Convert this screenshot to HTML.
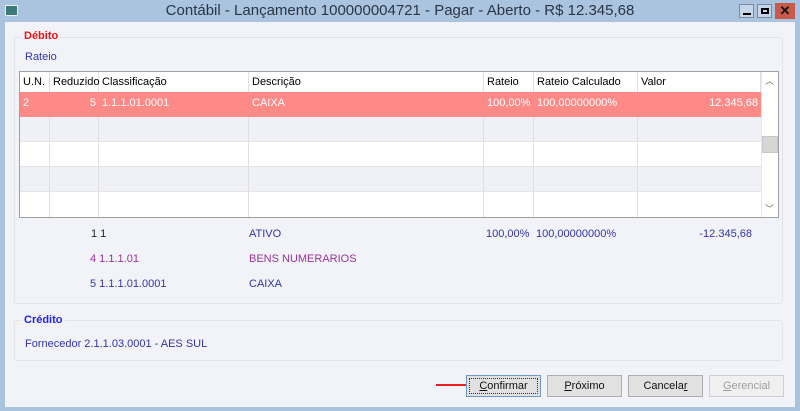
<!DOCTYPE html>
<html><head><style>
*{margin:0;padding:0;box-sizing:border-box}
body{width:800px;height:411px;overflow:hidden;background:#a9c2dd;font-family:"Liberation Sans",sans-serif;font-size:11px;position:relative}
.a{position:absolute}
.title{left:0;top:0;width:800px;height:22px;background:#aac3df;text-align:center;font-size:15px;color:#2b3645;line-height:22px}
.body{left:5px;top:22px;width:790px;height:385px;background:#f2f3f8}
.grp{border:1px solid #e2e4ea;border-radius:3px;background:#f2f3f8}
.lbl{font-weight:bold;font-size:11px}
.grid{left:19px;top:71px;width:760px;height:147px;border:1px solid #a0a0a0;background:#fff;overflow:hidden}
.row{position:absolute;left:0;width:741px;height:25px}
.c{position:absolute;top:0;height:100%;border-right:1px solid #e0e0e0;padding:0 3px;white-space:nowrap;line-height:20px}
.btn{position:absolute;top:375px;width:75px;height:22px;border:1px solid #adadad;background:#e1e1e1;text-align:center;line-height:20px;font-size:11px;color:#111}
</style></head><body>
<div class="a title">Contábil - Lançamento 100000004721 - Pagar - Aberto - R$ 12.345,68</div>
<div class="a" style="left:5px;top:5px;width:13px;height:11px;background:#3c7a7a;border:1px solid #eee"></div>
<div class="a" style="left:739px;top:4px;width:15px;height:14px;background:#c6d6e8;border:1px solid #7a8aa0"><div class="a" style="left:3px;top:8px;width:8px;height:2px;background:#000"></div></div>
<div class="a" style="left:757px;top:4px;width:15px;height:14px;background:#c6d6e8;border:1px solid #7a8aa0"><div class="a" style="left:3px;top:3px;width:8px;height:6px;border:2px solid #000"></div></div>
<div class="a" style="left:775px;top:3px;width:20px;height:16px;background:#c75a48;color:#111;font-weight:bold;text-align:center;line-height:16px;font-size:13px">✕</div>
<div class="a body"></div>
<div class="a grp" style="left:14px;top:37px;width:769px;height:267px"></div>
<div class="a lbl" style="left:22px;top:30px;color:#ee1111;background:#f2f3f8;padding:0 2px">Débito</div>
<div class="a" style="left:25px;top:51px;color:#3333aa">Rateio</div>
<div class="a grid">
 <div class="row" style="top:0;height:20px;background:#fff">
  <div class="c" style="left:0;width:30px">U.N.</div><div class="c" style="left:30px;width:49px">Reduzido</div><div class="c" style="left:79px;width:150px">Classificação</div><div class="c" style="left:229px;width:235px">Descrição</div><div class="c" style="left:464px;width:50px">Rateio</div><div class="c" style="left:514px;width:104px">Rateio Calculado</div><div class="c" style="left:618px;width:123px">Valor</div>
 </div>
 <div class="row" style="top:20px;height:25px;background:#fd8a87;color:#fff">
  <div class="c" style="left:0;width:30px;border:0;line-height:22px">2</div><div class="c" style="left:30px;width:49px;border:0;text-align:right;line-height:22px">5</div><div class="c" style="left:79px;width:150px;border:0;line-height:22px">1.1.1.01.0001</div><div class="c" style="left:229px;width:235px;border:0;line-height:22px">CAIXA</div><div class="c" style="left:464px;width:50px;border:0;line-height:22px">100,00%</div><div class="c" style="left:514px;width:104px;border:0;line-height:22px">100,00000000%</div><div class="c" style="left:618px;width:123px;border:0;text-align:right;line-height:22px">12.345,68</div>
 </div>
 <div class="row" style="top:45px;background:#f0f1f6;border-bottom:1px solid #e4e4e4"></div>
 <div class="row" style="top:70px;background:#fff;border-bottom:1px solid #e4e4e4"></div>
 <div class="row" style="top:95px;background:#f0f1f6;border-bottom:1px solid #e4e4e4"></div>
 <div class="row" style="top:120px;background:#fff"></div>
 <div class="a" style="left:29px;top:45px;height:102px;border-left:1px solid #e0e0e0"></div>
 <div class="a" style="left:78px;top:45px;height:102px;border-left:1px solid #e0e0e0"></div>
 <div class="a" style="left:228px;top:45px;height:102px;border-left:1px solid #e0e0e0"></div>
 <div class="a" style="left:463px;top:45px;height:102px;border-left:1px solid #e0e0e0"></div>
 <div class="a" style="left:513px;top:45px;height:102px;border-left:1px solid #e0e0e0"></div>
 <div class="a" style="left:617px;top:45px;height:102px;border-left:1px solid #e0e0e0"></div>
 <div class="a" style="left:741px;top:0;width:17px;height:145px;background:#fff;border-left:1px solid #e8e8e8">
  <div class="a" style="left:3px;top:2px;font-size:9px;color:#666">︿</div>
  <div class="a" style="left:0;top:64px;width:16px;height:17px;background:#d6d6d6;border:1px solid #c8c8c8"></div>
  <div class="a" style="left:3px;top:130px;font-size:9px;color:#666">﹀</div>
 </div>
</div>
<div class="a" style="left:91px;top:228px;color:#222">1 1</div>
<div class="a" style="left:249px;top:228px;color:#3333aa">ATIVO</div>
<div class="a" style="left:486px;top:228px;color:#3333aa">100,00%</div>
<div class="a" style="left:536px;top:228px;color:#3333aa">100,00000000%</div>
<div class="a" style="left:680px;top:228px;width:72px;text-align:right;color:#3333aa">-12.345,68</div>
<div class="a" style="left:90px;top:253px;color:#993399">4 1.1.1.01</div>
<div class="a" style="left:249px;top:253px;color:#993399">BENS NUMERARIOS</div>
<div class="a" style="left:90px;top:278px;color:#3333aa">5 1.1.1.01.0001</div>
<div class="a" style="left:249px;top:278px;color:#3333aa">CAIXA</div>
<div class="a grp" style="left:14px;top:320px;width:769px;height:41px"></div>
<div class="a lbl" style="left:22px;top:314px;color:#2222ee;background:#f2f3f8;padding:0 2px">Crédito</div>
<div class="a" style="left:25px;top:338px;color:#3333aa">Fornecedor 2.1.1.03.0001 - AES SUL</div>
<div class="a" style="left:436px;top:384px;width:40px;height:2px;background:#e82020"></div>
<div class="a" style="left:472px;top:380px;width:0;height:0;border-left:8px solid #e82020;border-top:5px solid transparent;border-bottom:5px solid transparent"></div>
<div class="btn" style="left:466px;border-color:#6a9ad0;outline:1px dotted #333;outline-offset:-4px"><u>C</u>onfirmar</div>
<div class="btn" style="left:547px"><u>P</u>róximo</div>
<div class="btn" style="left:628px">Cancela<u>r</u></div>
<div class="btn" style="left:709px;background:#f0f0f0;border-color:#cfcfcf;color:#a0a0a0"><u>G</u>erencial</div>
</body></html>
